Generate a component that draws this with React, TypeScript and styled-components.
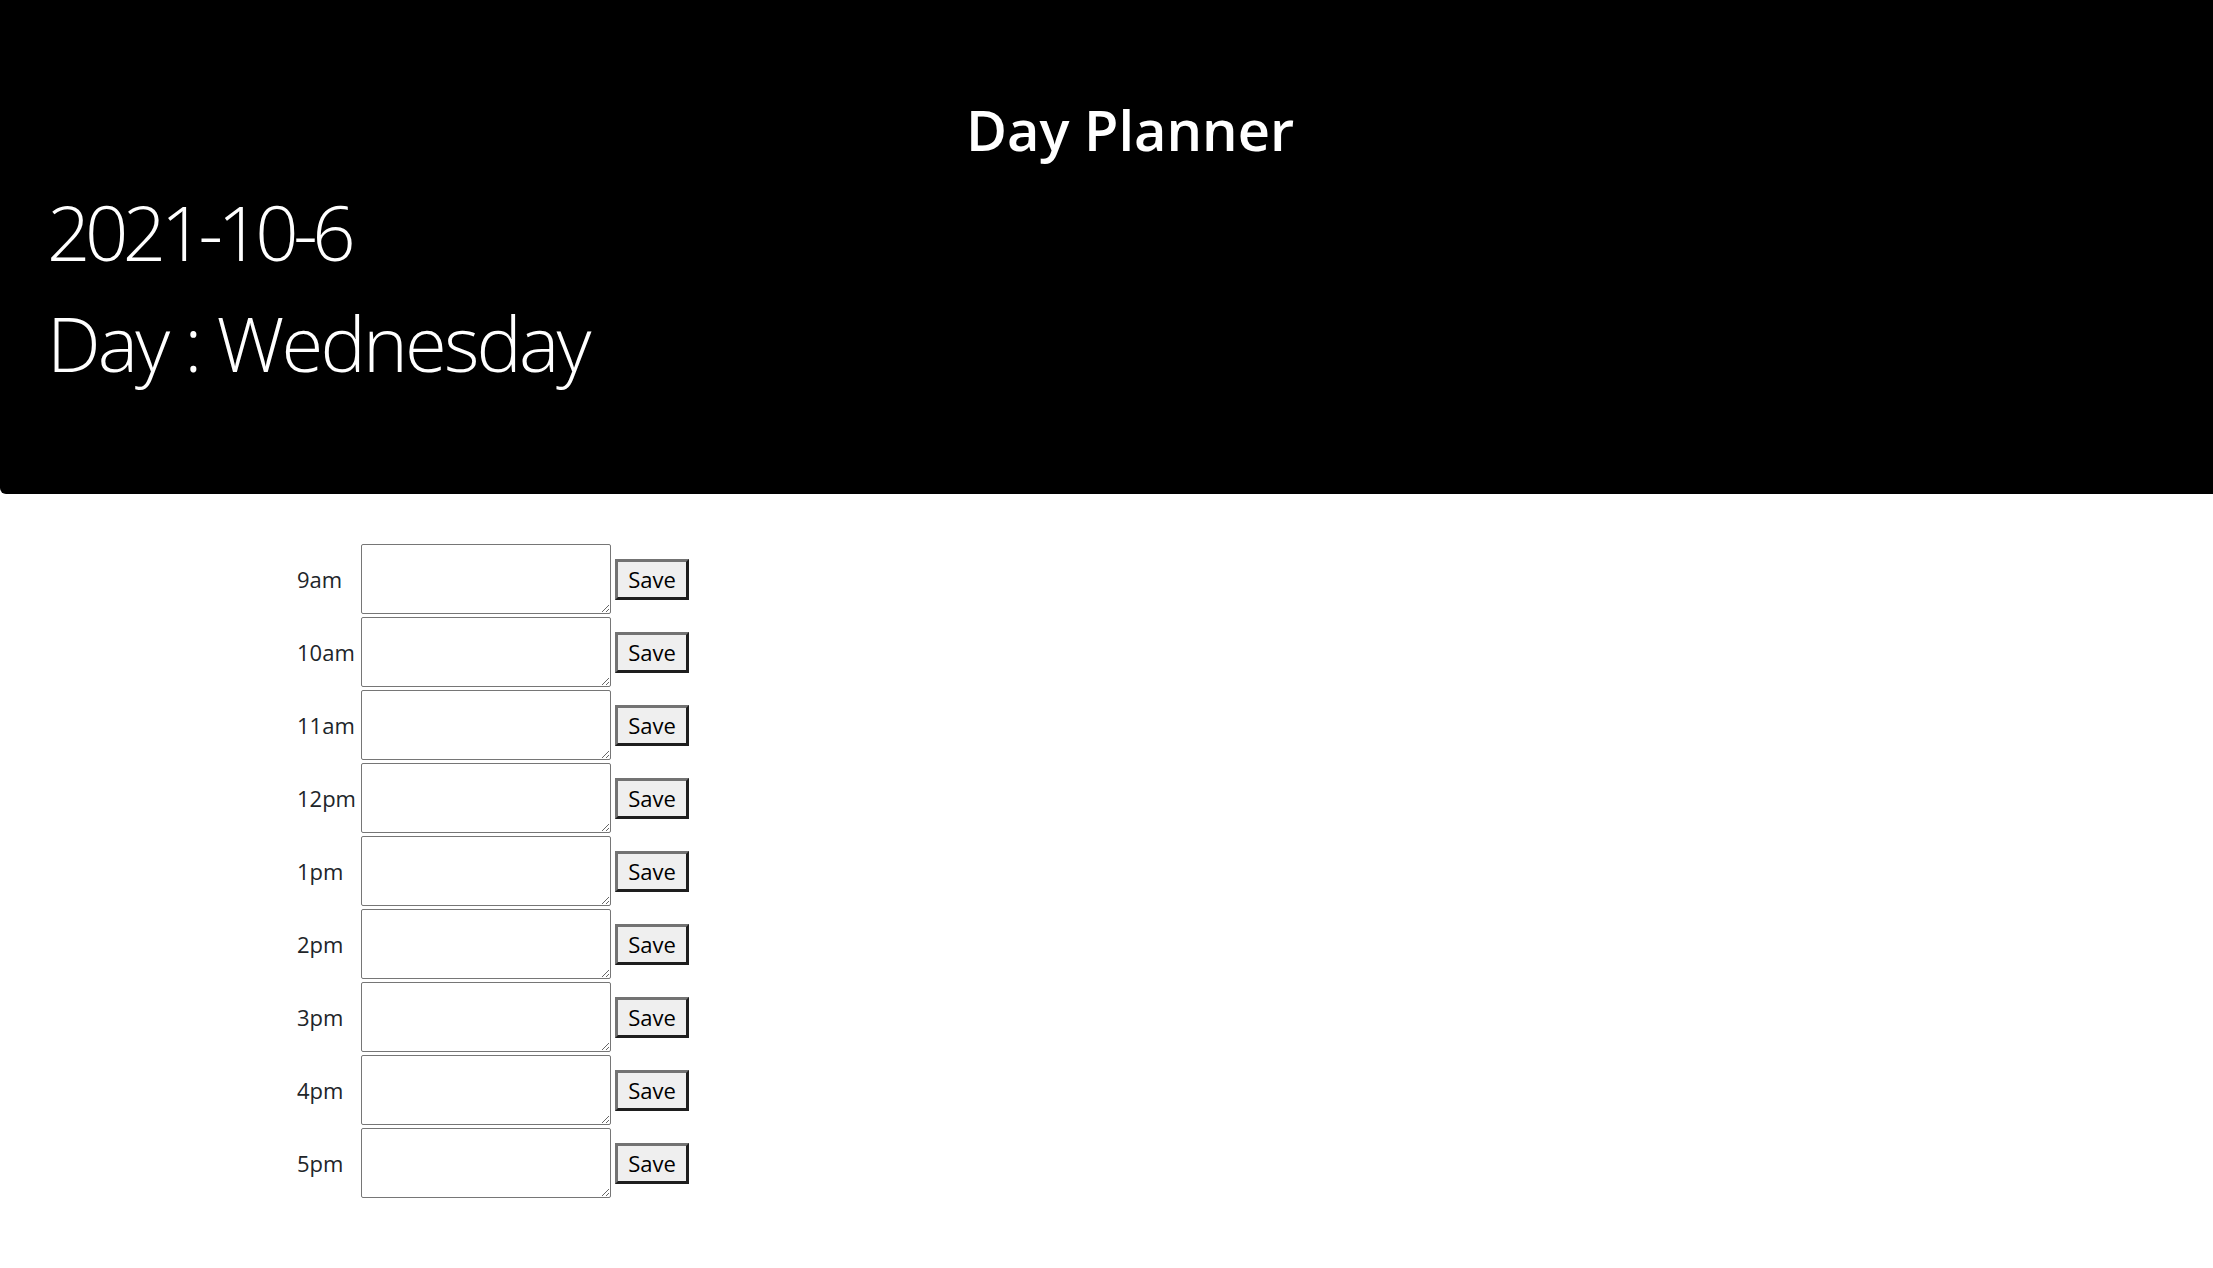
import React from "react";
import styled, { createGlobalStyle } from "styled-components";

const hours = ["9am", "10am", "11am", "12pm", "1pm", "2pm", "3pm", "4pm", "5pm"];

const GlobalStyle = createGlobalStyle`
  html, body {
    margin: 0;
    padding: 0;
    background: #fff;
  }
  body {
    font-family: "Open Sans", "Noto Sans", sans-serif;
    color: #212529;
  }
`;

const Header = styled.header`
  background: #000;
  color: #fff;
  border-bottom-left-radius: 6px;
  padding: 96px 0 104px 47px;
  display: flex;
  flex-direction: column;
`;

const Title = styled.h1`
  margin: 0;
  text-align: center;
  font-size: 56px;
  font-weight: 600;
  line-height: 67px;
`;

const Lead = styled.p<{ $gap: number; $spacing: number }>`
  margin: ${(p) => p.$gap}px 0 0;
  font-size: 76px;
  font-weight: 300;
  letter-spacing: ${(p) => p.$spacing}px;
  line-height: 94px;
`;

const Planner = styled.section`
  display: grid;
  grid-template-columns: 60px 250px auto;
  column-gap: 4px;
  row-gap: 3px;
  align-items: center;
  justify-content: start;
  padding: 50px 0 40px 297px;
`;

const Hour = styled.label`
  font-size: 22px;
  color: #212529;
`;

const Note = styled.textarea`
  box-sizing: border-box;
  width: 250px;
  height: 70px;
  margin: 0;
  border: 1px solid #767676;
  border-radius: 2px;
  background: #fff;
  font: inherit;
  resize: both;
`;

const SaveButton = styled.button`
  box-sizing: border-box;
  width: 74px;
  height: 41px;
  padding: 0;
  background: #efefef;
  border: 3px solid;
  border-color: #737373 #1e1e1e #1e1e1e #737373;
  font-family: "Open Sans", "Noto Sans", sans-serif;
  font-size: 22px;
  color: #000;
  cursor: pointer;
`;

export default function App() {
  return (
    <>
      <GlobalStyle />
      <Header>
        <Title>Day Planner</Title>
        <Lead $gap={22} $spacing={-5.5}>2021-10-6</Lead>
        <Lead $gap={17} $spacing={-2.8}>Day : Wednesday</Lead>
      </Header>
      <Planner>
        {hours.map((h) => (
          <React.Fragment key={h}>
            <Hour>{h}</Hour>
            <Note />
            <SaveButton>Save</SaveButton>
          </React.Fragment>
        ))}
      </Planner>
    </>
  );
}
